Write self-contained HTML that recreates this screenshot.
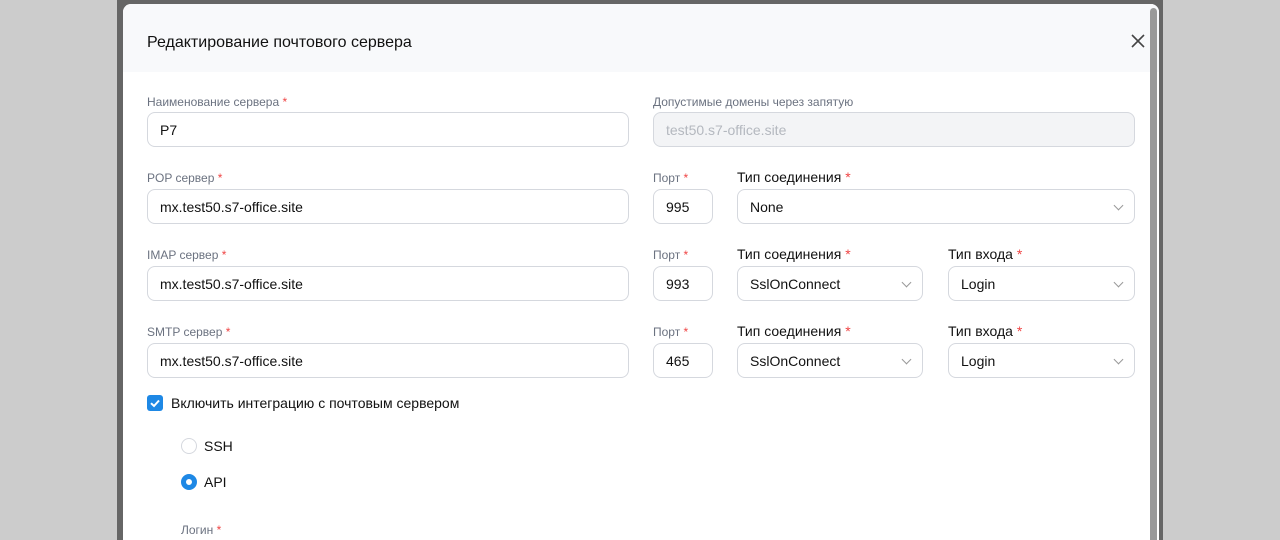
<!DOCTYPE html>
<html style="width:1280px;height:540px;overflow:hidden"><head><meta charset="utf-8"><style>
*{box-sizing:border-box;margin:0;padding:0}
body{width:1280px;height:540px;overflow:hidden;background:#cccccc;font-family:"Liberation Sans",sans-serif;position:relative}
.ov{position:absolute;left:117px;top:0;width:1046px;height:540px;background:#666}
.modal{position:absolute;left:123px;top:4px;width:1036px;height:536px;background:#fff;border-radius:8px 8px 0 0;overflow:hidden}
.hdr{height:68px;background:#f8f9fb;padding:0 24px;font-size:16px;color:#111;line-height:78px}
.x{position:absolute;left:1008px;top:30px}
.sb{position:absolute;left:1027px;top:4px;width:7px;height:540px;background:#999;border-radius:4px}
.lbl{position:absolute;font-size:12px;color:#6b7280}
.lbl b,.lb2 b{color:#ef4444;font-weight:normal}
.lb2{position:absolute;font-size:14px;color:#111}
.in{position:absolute;height:35px;border:1px solid #d5d8de;border-radius:8px;font-size:14px;color:#111;padding-left:12px;line-height:35px}
.dis{background:#f3f4f6;color:#b4b8bf}
.sel::after{content:"";position:absolute;right:12px;top:12px;width:6px;height:6px;border-right:1px solid #999;border-bottom:1px solid #999;transform:rotate(45deg)}
.cb{position:absolute;left:24px;top:391px;width:16px;height:16px;background:#1e88e5;border-radius:3px}
.t{position:absolute;font-size:14px;color:#111}
.r{position:absolute;width:16px;height:16px;border-radius:50%}
</style></head><body>
<div class="ov"></div>
<div class="modal">
<div class="hdr">Редактирование почтового сервера</div>
<svg class="x" width="14" height="14" viewBox="0 0 14 14"><path d="M1 1L13 13M13 1L1 13" stroke="#444" stroke-width="1.6"/></svg>
<div class="lbl" style="left:24px;top:91px">Наименование сервера <b>*</b></div>
<div class="in" style="left:24px;top:108px;width:482px">P7</div>
<div class="lbl" style="left:530px;top:91px">Допустимые домены через запятую</div>
<div class="in dis" style="left:530px;top:108px;width:482px">test50.s7-office.site</div>

<div class="lbl" style="left:24px;top:167px">POP сервер <b>*</b></div>
<div class="in" style="left:24px;top:185px;width:482px">mx.test50.s7-office.site</div>
<div class="lbl" style="left:530px;top:167px">Порт <b>*</b></div>
<div class="in" style="left:530px;top:185px;width:60px">995</div>
<div class="lb2" style="left:614px;top:165px">Тип соединения <b>*</b></div>
<div class="in sel" style="left:614px;top:185px;width:398px">None</div>

<div class="lbl" style="left:24px;top:244px">IMAP сервер <b>*</b></div>
<div class="in" style="left:24px;top:262px;width:482px">mx.test50.s7-office.site</div>
<div class="lbl" style="left:530px;top:244px">Порт <b>*</b></div>
<div class="in" style="left:530px;top:262px;width:60px">993</div>
<div class="lb2" style="left:614px;top:242px">Тип соединения <b>*</b></div>
<div class="in sel" style="left:614px;top:262px;width:186px">SslOnConnect</div>
<div class="lb2" style="left:825px;top:242px">Тип входа <b>*</b></div>
<div class="in sel" style="left:825px;top:262px;width:187px">Login</div>

<div class="lbl" style="left:24px;top:321px">SMTP сервер <b>*</b></div>
<div class="in" style="left:24px;top:339px;width:482px">mx.test50.s7-office.site</div>
<div class="lbl" style="left:530px;top:321px">Порт <b>*</b></div>
<div class="in" style="left:530px;top:339px;width:60px">465</div>
<div class="lb2" style="left:614px;top:319px">Тип соединения <b>*</b></div>
<div class="in sel" style="left:614px;top:339px;width:186px">SslOnConnect</div>
<div class="lb2" style="left:825px;top:319px">Тип входа <b>*</b></div>
<div class="in sel" style="left:825px;top:339px;width:187px">Login</div>

<div class="cb"><svg width="16" height="16" viewBox="0 0 16 16"><path d="M4 8.2L7 11L12 5.5" stroke="#fff" stroke-width="2" fill="none"/></svg></div>
<div class="t" style="left:48px;top:391px">Включить интеграцию с почтовым сервером</div>
<div class="r" style="left:58px;top:434px;border:1px solid #d5d8de"></div>
<div class="t" style="left:81px;top:434px">SSH</div>
<div class="r" style="left:58px;top:470px;border:5px solid #1e88e5"></div>
<div class="t" style="left:81px;top:470px">API</div>
<div class="lbl" style="left:58px;top:519px">Логин <b>*</b></div>
<div class="sb"></div>
</div>
</body></html>
